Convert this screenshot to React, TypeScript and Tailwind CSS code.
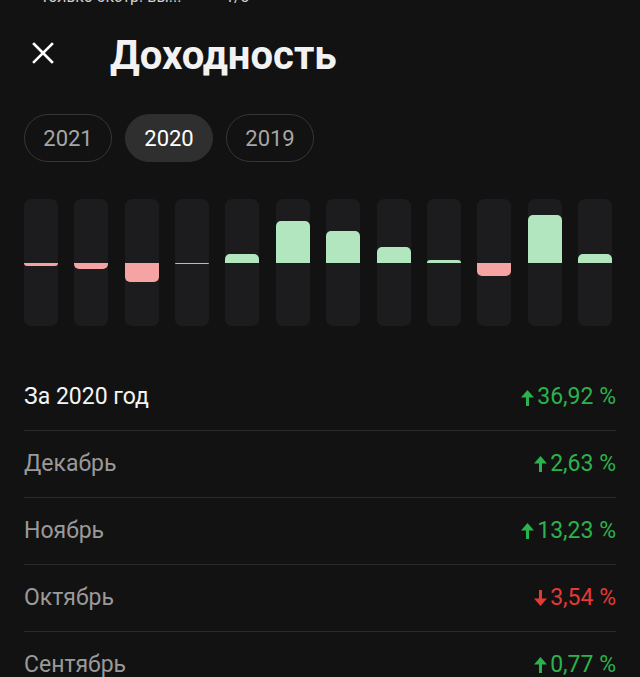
import { useState } from "react";

const months = [
  { name: "Январь", value: -0.7 },
  { name: "Февраль", value: -1.7 },
  { name: "Март", value: -5.3 },
  { name: "Апрель", value: -0.3 },
  { name: "Май", value: 2.5 },
  { name: "Июнь", value: 11.6 },
  { name: "Июль", value: 8.9 },
  { name: "Август", value: 4.4 },
  { name: "Сентябрь", value: 0.77 },
  { name: "Октябрь", value: -3.54 },
  { name: "Ноябрь", value: 13.23 },
  { name: "Декабрь", value: 2.63 },
];

const rows = [
  { label: "Декабрь", value: 2.63 },
  { label: "Ноябрь", value: 13.23 },
  { label: "Октябрь", value: -3.54 },
  { label: "Сентябрь", value: 0.77 },
  { label: "Август", value: 4.4 },
];

const PX_PER_PCT = 3.6;

function Arrow({ up }: { up: boolean }) {
  return (
    <svg
      width="13"
      height="16"
      viewBox="0 0 13 16"
      className={up ? "" : "rotate-180"}
      fill="currentColor"
    >
      <polygon points="6.5,0 13,7.5 0,7.5" />
      <rect x="5" y="6.5" width="3" height="9.5" />
    </svg>
  );
}

function Percent({ value }: { value: number }) {
  const up = value >= 0;
  return (
    <div
      className={`flex items-center gap-[3px] ${
        up ? "text-[#2bb24c]" : "text-[#e53935]"
      }`}
    >
      <Arrow up={up} />
      <span>{Math.abs(value).toFixed(2).replace(".", ",")} %</span>
    </div>
  );
}

export default function App() {
  const [year, setYear] = useState(2020);

  return (
    <div
      className="w-full h-[677px] overflow-hidden bg-[#121212] text-white"
      style={{ fontFamily: "Roboto, 'Noto Sans', sans-serif" }}
    >
      {/* clipped line of the screen behind */}
      <div className="h-[7px] overflow-hidden flex items-end">
        <div className="flex text-[16px] leading-[20px] text-[#cfcfcf] pl-[41px]">
          <span className="w-[184px]">только экстр. вы...</span>
          <span>1/3</span>
        </div>
      </div>

      {/* Header */}
      <div className="flex items-center h-[48px] mt-[25px] pl-[32px]">
        <button className="-mt-[6px]">
          <svg width="22" height="22" viewBox="0 0 22 22" stroke="white" strokeWidth="2.6" strokeLinecap="square">
            <path d="M2 2 L20 20 M20 2 L2 20" />
          </svg>
        </button>
        <h1 className="ml-[56px] text-[40px] leading-[48px] font-bold text-[#f2f2f2]">
          Доходность
        </h1>
      </div>

      {/* Year pills */}
      <div className="flex gap-[13px] px-[24px] mt-[34px]">
        {[2021, 2020, 2019].map((y) => (
          <button
            key={y}
            onClick={() => setYear(y)}
            className={`w-[88px] h-[48px] rounded-full text-[22px] flex items-center justify-center ${
              y === year
                ? "bg-[#2f2f2f] text-white border border-[#2f2f2f]"
                : "border-[1.5px] border-[#363636] text-[#a6a6a6]"
            }`}
          >
            {y}
          </button>
        ))}
      </div>

      {/* Chart */}
      <div className="flex justify-between pl-[24px] pr-[28px] mt-[37px]">
        {months.map((m) => {
          const h = Math.max(1, Math.abs(m.value) * PX_PER_PCT);
          return (
            <div
              key={m.name}
              className="w-[34px] h-[127px] bg-[#1c1c1e] rounded-[7px] flex flex-col overflow-hidden"
            >
              <div className="h-[64px] flex items-end">
                {m.value > 0 && (
                  <div
                    className="w-full bg-[#b1e6be] rounded-t-[5px]"
                    style={{ height: h }}
                  />
                )}
              </div>
              <div className="flex-1 flex items-start">
                {m.value < 0 && (
                  <div
                    className="w-full bg-[#f6a3a3] rounded-b-[5px]"
                    style={{ height: h }}
                  />
                )}
              </div>
            </div>
          );
        })}
      </div>

      {/* List */}
      <div className="mx-[24px] mt-[39px] text-[23px]">
        <div className="h-[66px] flex items-center justify-between border-b border-[#2a2a2a]">
          <span className="text-[#f4f4f4]">За {year} год</span>
          <Percent value={36.92} />
        </div>
        {rows.map((r) => (
          <div
            key={r.label}
            className="h-[67px] flex items-center justify-between border-b border-[#2a2a2a]"
          >
            <span className="text-[#9a9a9a]">{r.label}</span>
            <Percent value={r.value} />
          </div>
        ))}
      </div>
    </div>
  );
}
